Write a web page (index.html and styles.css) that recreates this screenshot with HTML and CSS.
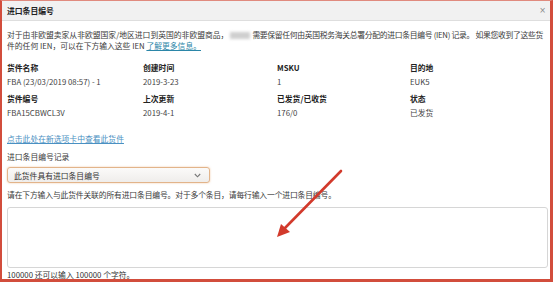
FILE: index.html
```html
<!DOCTYPE html>
<html lang="zh-CN">
<head>
<meta charset="utf-8">
<title>进口条目编号</title>
<link rel="stylesheet" href="styles.css">
</head>
<body>
<div class="frame">
  <div class="header">
    <span class="title">进口条目编号</span>
    <span class="close">×</span>
  </div>
  <div class="content">
    <p class="intro">对于由非欧盟卖家从非欧盟国家/地区进口到英国的非欧盟商品，<span class="smudge"></span><span class="tail">需要保留任何由英国税务海关总署分配的进口条目编号 (IEN) 记录。 如果您收到了这些货</span><br>件的任何 IEN，可以在下方输入这些 IEN <a class="more" href="#">了解更多信息。</a></p>
    <div class="grid">
      <div class="cell"><div class="label">货件名称</div><div class="value">FBA (23/03/2019 08:57) - 1</div></div>
      <div class="cell"><div class="label">创建时间</div><div class="value">2019-3-23</div></div>
      <div class="cell"><div class="label">MSKU</div><div class="value">1</div></div>
      <div class="cell"><div class="label">目的地</div><div class="value">EUK5</div></div>
      <div class="cell"><div class="label">货件编号</div><div class="value">FBA15CBWCL3V</div></div>
      <div class="cell"><div class="label">上次更新</div><div class="value">2019-4-1</div></div>
      <div class="cell"><div class="label">已发货/已收货</div><div class="value">176/0</div></div>
      <div class="cell"><div class="label">状态</div><div class="value">已发货</div></div>
    </div>
    <a class="view" href="#">点击此处在新选项卡中查看此货件</a>
    <div class="field-label">进口条目编号记录</div>
    <div class="select">
      <span>此货件具有进口条目编号</span>
      <svg class="chev" width="7" height="5" viewBox="0 0 7 5"><path d="M0.8 1 L3.5 3.8 L6.2 1" fill="none" stroke="#777" stroke-width="1.1"/></svg>
    </div>
    <div class="hint">请在下方输入与此货件关联的所有进口条目编号。对于多个条目，请每行输入一个进口条目编号。</div>
    <div class="textarea"></div>
    <div class="count">100000 还可以输入 100000 个字符。</div>
  </div>
  <svg class="arrow" width="553" height="282" viewBox="0 0 553 282">
    <line x1="341" y1="171" x2="284" y2="229" stroke="#d23a2c" stroke-width="2.6" stroke-linecap="round"/>
    <polygon points="277,237 281,224 290,232" fill="#d23a2c"/>
  </svg>
</div>
</body>
</html>
```
FILE: styles.css
```css
html, body {
  margin: 0;
  padding: 0;
  background: #ffffff;
}
body {
  width: 553px;
  height: 282px;
  overflow: hidden;
  font-family: "Noto Sans CJK SC", "Noto Sans", "DejaVu Sans", sans-serif;
  font-size: 7.8px;
  line-height: 11px;
  color: #3a3a3a;
}
.frame {
  position: relative;
  width: 553px;
  height: 282px;
  box-sizing: border-box;
  border-left: 2px solid #d24d3c;
  border-right: 3px solid #d24d3c;
  border-bottom: 3px solid #d24d3c;
  border-top: 1px solid #e08a7e;
  overflow: hidden;
  background: #fff;
}
.header {
  height: 19px;
  background: #f1f1f1;
  border-bottom: 1px solid #dedede;
  display: flex;
  align-items: center;
  justify-content: space-between;
  padding: 0 4px 0 5px;
}
.title {
  font-weight: bold;
  color: #222;
}
.close {
  color: #888;
  font-size: 8px;
  font-family: "DejaVu Sans", sans-serif;
}
.content {
  padding: 0 2px 0 5px;
}
.intro {
  margin: 8px 0 0 0;
  white-space: nowrap;
}
.tail {
  letter-spacing: -0.3px;
}
.smudge {
  display: inline-block;
  width: 20px;
  height: 7px;
  margin: 0 2px;
  background: #cfcfcf;
  filter: blur(1.5px);
  vertical-align: middle;
}
.more {
  color: #2b86a8;
  text-decoration: underline;
}
.grid {
  display: grid;
  grid-template-columns: 136px 134px 133px 1fr;
  row-gap: 6px;
  margin-top: 11px;
}
.label {
  font-weight: bold;
  color: #222;
}
.value {
  margin-top: 3px;
  color: #444;
}
.view {
  display: block;
  margin-top: 15px;
  color: #4a90c2;
  text-decoration: underline;
  width: max-content;
}
.field-label {
  margin-top: 7px;
}
.select {
  margin-top: 5px;
  width: 203px;
  height: 16px;
  box-sizing: border-box;
  border: 1px solid #e2b48a;
  border-radius: 3px;
  box-shadow: 0 0 2px rgba(232, 150, 80, 0.55);
  background: linear-gradient(#fbfaf9, #efedeb);
  display: flex;
  align-items: center;
  justify-content: space-between;
  padding: 0 8px 0 6px;
  color: #333;
}
.chev {
  display: block;
}
.hint {
  margin-top: 6px;
  letter-spacing: -0.15px;
}
.textarea {
  margin-top: 7px;
  height: 61px;
  box-sizing: border-box;
  border: 1px solid #d6d6d6;
  border-radius: 3px;
  background: #fff;
}
.count {
  margin-top: 1px;
  color: #333;
}
.arrow {
  position: absolute;
  left: -2px;
  top: -1px;
  pointer-events: none;
}
```
